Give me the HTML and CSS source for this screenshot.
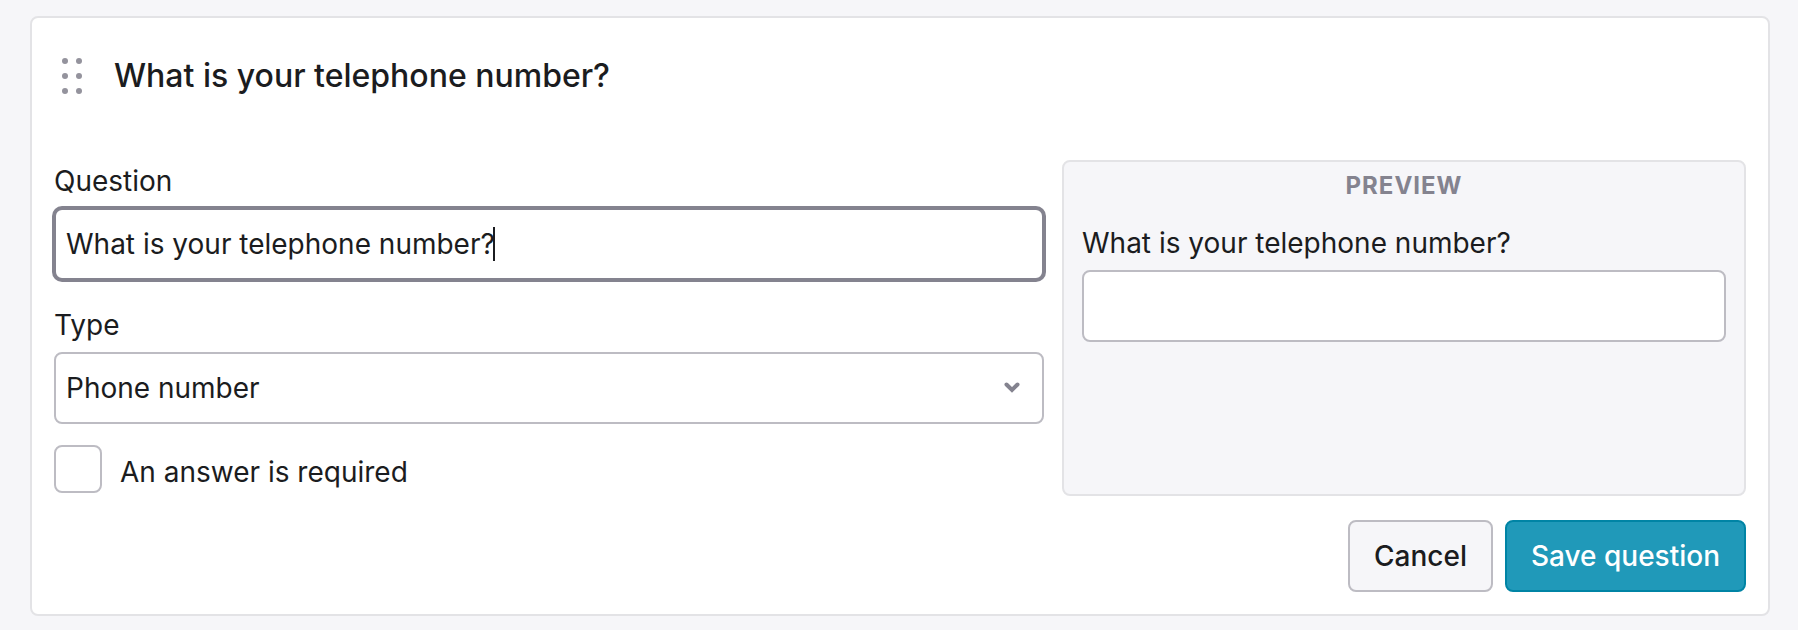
FILE: index.html
```html
<!DOCTYPE html>
<html lang="en">
<head>
    <meta charset="UTF-8">
    <meta name="viewport" content="width=device-width, initial-scale=1.0">
    <title>Edit question</title>
    <link rel="stylesheet" href="styles.css">
</head>
<body>
    <form class="card">
        <div class="card-header">
            <svg class="drag-handle" viewBox="0 0 36 36" aria-hidden="true">
                <circle cx="11" cy="3" r="3"/>
                <circle cx="25" cy="3" r="3"/>
                <circle cx="11" cy="18" r="3"/>
                <circle cx="25" cy="18" r="3"/>
                <circle cx="11" cy="33" r="3"/>
                <circle cx="25" cy="33" r="3"/>
            </svg>
            <h2>What is your telephone number?</h2>
        </div>

        <div class="columns">
            <div class="fields">
                <label for="question">Question</label>
                <div class="control">
                    <input type="text" id="question" class="focused" value="What is your telephone number?">
                    <span class="caret"></span>
                </div>

                <label for="type">Type</label>
                <div class="control">
                    <select id="type">
                        <option>Phone number</option>
                    </select>
                    <svg class="chevron" viewBox="0 0 16 12" aria-hidden="true">
                        <path d="M2.5 2.5l5.5 5.5 5.5-5.5"/>
                    </svg>
                </div>

                <div class="checkbox">
                    <input type="checkbox" id="required">
                    <label for="required">An answer is required</label>
                </div>
            </div>

            <div class="preview">
                <h3>PREVIEW</h3>
                <label for="answer">What is your telephone number?</label>
                <input type="text" id="answer">
            </div>
        </div>

        <div class="actions">
            <button type="button">Cancel</button>
            <button type="submit" class="primary">Save question</button>
        </div>
    </form>
</body>
</html>
```
FILE: styles.css
```css
* {
    box-sizing: border-box;
}
body {
    margin: 16px 28px 14px 30px;
    background-color: #f6f6f9;
    color: #1b1c20;
    font-family: Inter, "Liberation Sans", sans-serif;
    font-size: 28px;
    line-height: 42px;
}
.card {
    padding: 22px;
    background-color: #fff;
    border: 2px solid #e3e3e6;
    border-radius: 8px;
}

/* header */
.card-header {
    display: flex;
    align-items: center;
    gap: 24px;
    min-height: 72px;
    margin-bottom: 48px;
}
.drag-handle {
    width: 36px;
    height: 36px;
    fill: #94939d;
}
h2 {
    margin: 0;
    font-size: 32px;
    font-weight: 500;
}

/* fields on the left, preview on the right */
.columns {
    display: grid;
    grid-template-columns: 55fr 38fr;
    gap: 18px;
}
label {
    display: block;
}
input[type="text"], select {
    display: block;
    width: 100%;
    height: 72px;
    margin: 6px 0 0;
    padding: 0 10px;
    background-color: #fff;
    border: 2px solid #bdbcc3;
    border-radius: 8px;
    color: inherit;
    font: inherit;
    outline: none;
}
select {
    appearance: none;
}
input[type="text"].focused, input[type="text"]:focus {
    border-color: #84838f;
    box-shadow: 0 0 0 2px #84838f;
}
.control {
    position: relative;
    margin-bottom: 24px;
}
.caret {
    position: absolute;
    left: 439px;
    top: 19px;
    width: 2px;
    height: 34px;
    background-color: #1b1c20;
}
.chevron {
    position: absolute;
    right: 24px;
    top: 30px;
    width: 16px;
    height: 12px;
    fill: none;
    stroke: #84838f;
    stroke-width: 4;
    stroke-linecap: round;
}
.checkbox {
    display: flex;
    align-items: flex-end;
    gap: 18px;
    margin-top: -3px;
}
.checkbox input {
    appearance: none;
    width: 48px;
    height: 48px;
    margin: 0;
    background-color: #fff;
    border: 2px solid #bdbcc3;
    border-radius: 8px;
}
.checkbox input:checked {
    background-color: #2099b9;
}

.preview {
    min-height: 336px;
    padding: 6px 18px;
    background-color: #f6f6f9;
    border: 2px solid #e3e3e6;
    border-radius: 8px;
}
.preview h3 {
    margin: 0 0 18px;
    color: #84838f;
    font-size: 24px;
    font-weight: 700;
    letter-spacing: 1px;
    line-height: 36px;
    text-align: center;
}

/* buttons */
.actions {
    display: flex;
    justify-content: flex-end;
    gap: 12px;
    margin-top: 24px;
}
button {
    height: 72px;
    padding: 0 24px;
    background-color: #f6f6f9;
    border: 2px solid #bdbcc3;
    border-radius: 8px;
    color: inherit;
    font: inherit;
    font-weight: 500;
    cursor: pointer;
}
button.primary {
    background-color: #2099b9;
    border-color: #0084a5;
    color: #fff;
}
```
